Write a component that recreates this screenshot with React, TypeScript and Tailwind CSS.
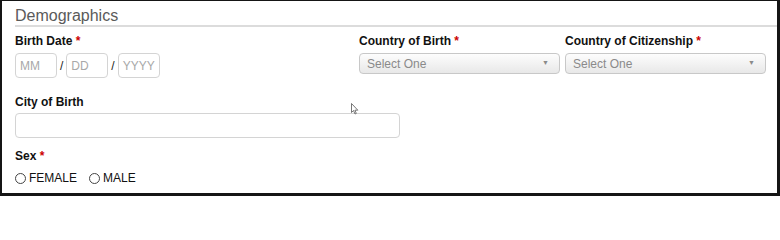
import React from "react";

const font = { fontFamily: '"Liberation Sans", Arial, sans-serif' };

function Req() {
  return <span className="text-[#cc0000]"> *</span>;
}

function Label({ children, req }: { children: React.ReactNode; req?: boolean }) {
  return (
    <div className="text-[12px] leading-[16px] font-bold text-[#111]">
      {children}
      {req && <Req />}
    </div>
  );
}

function TextBox({ placeholder, w }: { placeholder?: string; w: string }) {
  return (
    <div
      className={`${w} h-[25px] border border-[#d4d4d4] rounded-[4px] bg-white flex items-center pl-[4px] text-[12px] text-[#a8a8a8]`}
    >
      {placeholder}
    </div>
  );
}

function SelectBox() {
  return (
    <div className="w-[201px] h-[21px] border border-[#c8c8c8] rounded-[4px] bg-gradient-to-b from-[#fdfdfd] to-[#e8e8e8] flex items-center justify-between pl-[7px] pr-[10px]">
      <span className="text-[12px] text-[#8a8a8a]">Select One</span>
      <span className="text-[7px] text-[#8a8a8a]">▼</span>
    </div>
  );
}

function Radio({ label }: { label: string }) {
  return (
    <div className="flex items-center gap-[3px]">
      <span className="w-[11px] h-[11px] rounded-full border border-[#444] bg-white" />
      <span className="text-[12px] text-[#111]">{label}</span>
    </div>
  );
}

export default function App() {
  return (
    <div className="w-[780px] h-[200px] bg-white relative" style={font}>
      <div className="h-[196px] border-l-2 border-t border-r-[3px] border-b-[3px] border-[#151515] pl-[13px]">
        {/* Legend */}
        <div className="pt-[5px] border-b-2 border-[#dcdcdc] text-[16px] leading-[19px] text-[#5a5a5a]">
          Demographics
        </div>

        {/* Row 1 */}
        <div className="flex mt-[6px]">
          <div className="w-[344px]">
            <Label req>Birth Date</Label>
            <div className="flex items-center gap-[3px] mt-[4px]">
              <TextBox placeholder="MM" w="w-[42px]" />
              <span className="text-[12px] text-[#222]">/</span>
              <TextBox placeholder="DD" w="w-[42px]" />
              <span className="text-[12px] text-[#222]">/</span>
              <TextBox placeholder="YYYY" w="w-[42px]" />
            </div>
          </div>
          <div className="w-[206px]">
            <Label req>Country of Birth</Label>
            <div className="mt-[4px]">
              <SelectBox />
            </div>
          </div>
          <div>
            <Label req>Country of Citizenship</Label>
            <div className="mt-[4px]">
              <SelectBox />
            </div>
          </div>
        </div>

        {/* City of Birth */}
        <div className="mt-[16px]">
          <Label>City of Birth</Label>
          <div className="mt-[3px]">
            <TextBox w="w-[385px]" />
          </div>
        </div>

        {/* Sex */}
        <div className="mt-[10px]">
          <Label req>Sex</Label>
          <div className="flex items-center gap-[12px] mt-[5px]">
            <Radio label="FEMALE" />
            <Radio label="MALE" />
          </div>
        </div>
      </div>

      {/* mouse pointer */}
      <svg
        className="absolute left-[351px] top-[103px]"
        width="8"
        height="12"
        viewBox="0 0 8 12"
      >
        <path
          d="M0.5 0.5 L0.5 9.5 L2.5 7.5 L4 11 L5.3 10.4 L3.9 7.2 L6.8 7.2 Z"
          fill="#fff"
          stroke="#555"
          strokeWidth="0.8"
        />
      </svg>
    </div>
  );
}
